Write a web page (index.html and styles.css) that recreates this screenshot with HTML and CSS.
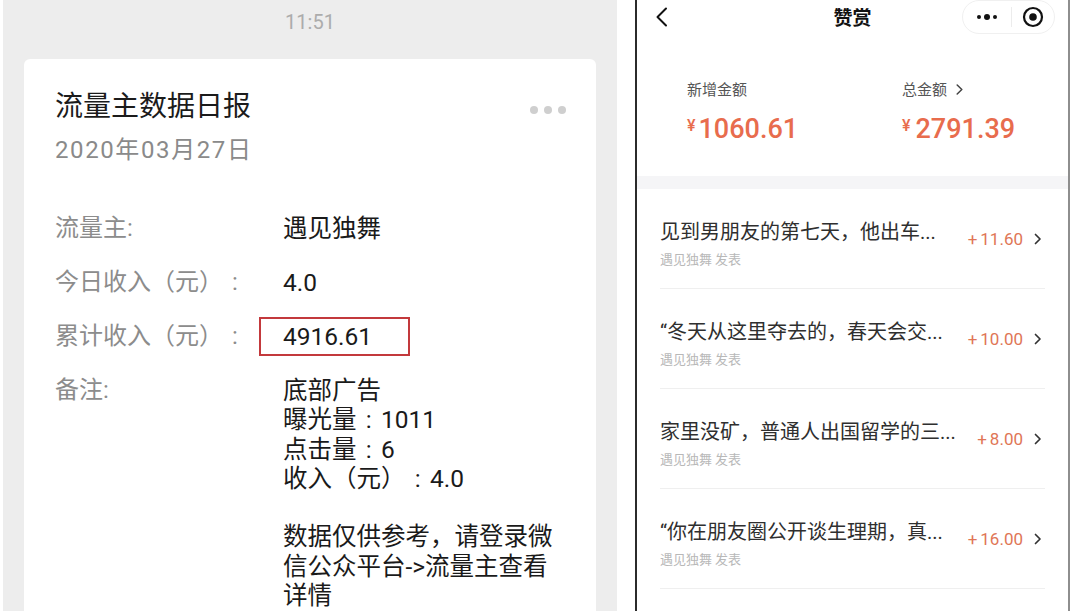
FILE: index.html
```html
<!DOCTYPE html>
<html lang="zh-CN">
<head>
<meta charset="utf-8">
<title>流量主数据日报 / 赞赏</title>
<link rel="stylesheet" href="styles.css">
</head>
<body>
<div class="page">
  <section class="chat">
    <div class="time">11:51</div>
    <article class="card">
      <header class="card-head">
        <div>
          <h1 class="card-title">流量主数据日报</h1>
          <div class="card-date">2020年03月27日</div>
        </div>
        <span class="more"><i></i><i></i><i></i></span>
      </header>
      <dl class="fields">
        <div class="field"><dt>流量主:</dt><dd>遇见独舞</dd></div>
        <div class="field"><dt>今日收入（元）<span class="colon">:</span></dt><dd>4.0</dd></div>
        <div class="field"><dt>累计收入（元）<span class="colon">:</span></dt><dd><span class="mark">4916.61</span></dd></div>
        <div class="field"><dt>备注:</dt>
          <dd>
            <span class="line">底部广告</span>
            <span class="line">曝光量<span class="colon">:</span>1011</span>
            <span class="line">点击量<span class="colon">:</span>6</span>
            <span class="line">收入（元）<span class="colon">:</span>4.0</span>
            <span class="line blank"></span>
            <span class="line">数据仅供参考，请登录微</span>
            <span class="line">信公众平台-&gt;流量主查看</span>
            <span class="line">详情</span>
          </dd>
        </div>
      </dl>
    </article>
  </section>

  <section class="phone">
    <header class="nav">
      <span class="back">
        <svg width="13" height="20" viewBox="0 0 13 20"><polyline points="11,1.5 2.5,10 11,18.5" fill="none" stroke="#111" stroke-width="2" stroke-linecap="round" stroke-linejoin="round"/></svg>
      </span>
      <span class="nav-title">赞赏</span>
      <div class="capsule">
        <span class="cap-more"><i></i><i class="big"></i><i></i></span>
        <span class="cap-sep"></span>
        <span class="cap-close">
          <svg width="22" height="22" viewBox="0 0 22 22"><circle cx="11" cy="11" r="9" fill="none" stroke="#111" stroke-width="2.2"/><circle cx="11" cy="11" r="3.8" fill="#111"/></svg>
        </span>
      </div>
    </header>

    <div class="summary">
      <div class="stat">
        <div class="stat-label">新增金额</div>
        <div class="stat-value"><span class="yen">¥</span>1060.61</div>
      </div>
      <div class="stat">
        <div class="stat-label">总金额
          <svg width="7" height="11" viewBox="0 0 7 11"><polyline points="1.2,1 5.8,5.5 1.2,10" fill="none" stroke="#444" stroke-width="1.5" stroke-linecap="round" stroke-linejoin="round"/></svg>
        </div>
        <div class="stat-value"><span class="yen wide">¥</span>2791.39</div>
      </div>
    </div>

    <div class="band"></div>

    <ul class="list">
      <li class="item">
        <div class="item-main">
          <div class="item-title">见到男朋友的第七天，他出车...</div>
          <div class="item-sub">遇见独舞 发表</div>
        </div>
        <span class="item-amount"><span class="plus">+</span>11.60</span>
        <svg class="chev" width="8" height="12" viewBox="0 0 8 12"><polyline points="1.5,1.5 6,6 1.5,10.5" fill="none" stroke="#333" stroke-width="1.7" stroke-linecap="round" stroke-linejoin="round"/></svg>
      </li>
      <li class="item">
        <div class="item-main">
          <div class="item-title">“冬天从这里夺去的，春天会交...</div>
          <div class="item-sub">遇见独舞 发表</div>
        </div>
        <span class="item-amount"><span class="plus">+</span>10.00</span>
        <svg class="chev" width="8" height="12" viewBox="0 0 8 12"><polyline points="1.5,1.5 6,6 1.5,10.5" fill="none" stroke="#333" stroke-width="1.7" stroke-linecap="round" stroke-linejoin="round"/></svg>
      </li>
      <li class="item">
        <div class="item-main">
          <div class="item-title">家里没矿，普通人出国留学的三...</div>
          <div class="item-sub">遇见独舞 发表</div>
        </div>
        <span class="item-amount"><span class="plus">+</span>8.00</span>
        <svg class="chev" width="8" height="12" viewBox="0 0 8 12"><polyline points="1.5,1.5 6,6 1.5,10.5" fill="none" stroke="#333" stroke-width="1.7" stroke-linecap="round" stroke-linejoin="round"/></svg>
      </li>
      <li class="item">
        <div class="item-main">
          <div class="item-title">“你在朋友圈公开谈生理期，真...</div>
          <div class="item-sub">遇见独舞 发表</div>
        </div>
        <span class="item-amount"><span class="plus">+</span>16.00</span>
        <svg class="chev" width="8" height="12" viewBox="0 0 8 12"><polyline points="1.5,1.5 6,6 1.5,10.5" fill="none" stroke="#333" stroke-width="1.7" stroke-linecap="round" stroke-linejoin="round"/></svg>
      </li>
    </ul>
  </section>
</div>
</body>
</html>
```

FILE: styles.css
```css
html, body {
  margin: 0;
  padding: 0;
  width: 1080px;
  height: 611px;
  overflow: hidden;
  background: #ffffff;
  font-family: "Roboto", "Noto Sans CJK SC", sans-serif;
  text-spacing-trim: space-all;
}

.page {
  display: flex;
  height: 611px;
}

/* ---------- left: chat card ---------- */
.chat {
  margin-left: 3px;
  width: 614px;
  height: 611px;
  background: #ededed;
  display: flex;
  flex-direction: column;
  overflow: hidden;
}

.time {
  padding-top: 10px;
  height: 24px;
  line-height: 24px;
  text-align: center;
  font-size: 20px;
  color: #acacac;
}

.card {
  margin: 25px 21px 0 21px;
  flex: 1;
  background: #ffffff;
  border-radius: 6px 6px 0 0;
  padding: 28px 30px 0 31px;
}

.card-head {
  display: flex;
  justify-content: space-between;
  align-items: flex-start;
}

.card-title {
  margin: 0;
  font-size: 28px;
  line-height: 34px;
  font-weight: 400;
  color: #1b1b1b;
  font-family: "Noto Sans CJK SC", sans-serif;
}

.card-date {
  margin-top: 14px;
  font-size: 24px;
  line-height: 30px;
  letter-spacing: 1.6px;
  color: #8a8a8a;
}

.more {
  display: flex;
  gap: 6px;
  margin-top: 19px;
}
.more i {
  display: block;
  width: 8px;
  height: 8px;
  border-radius: 50%;
  background: #cfcfcf;
}

.fields {
  margin: 49px 0 0 0;
}

.field {
  display: grid;
  grid-template-columns: 228px 1fr;
  margin-bottom: 24.7px;
}

.field dt {
  font-size: 24px;
  line-height: 29.3px;
  color: #8c8c8c;
}

.field dd {
  margin: 0;
  font-size: 24.5px;
  line-height: 29.3px;
  color: #1a1a1a;
}

.colon {
  display: inline-block;
  width: 1em;
  text-align: center;
}

.line {
  display: block;
  height: 29.3px;
}

.mark {
  position: relative;
  display: inline-block;
}
.mark::before {
  content: "";
  position: absolute;
  left: -24px;
  top: -5px;
  width: 151px;
  height: 39px;
  box-sizing: border-box;
  border: 2px solid #c3393c;
}

/* ---------- right: reward page ---------- */
.phone {
  margin-left: 18px;
  width: 431px;
  height: 611px;
  border-left: 2px solid #2b2b2b;
  border-right: 2px solid #8e8e8e;
  background: #ffffff;
  overflow: hidden;
}

.nav {
  display: grid;
  grid-template-columns: 1fr auto 1fr;
  align-items: center;
  height: 30px;
}

.back {
  padding-left: 18px;
  display: flex;
  align-items: center;
}

.nav-title {
  font-family: "Noto Sans CJK SC", sans-serif;
  font-size: 19px;
  font-weight: 600;
  color: #111;
  line-height: 24px;
}

.capsule {
  justify-self: end;
  margin-right: 13px;
  width: 93px;
  height: 34px;
  box-sizing: border-box;
  border: 1px solid #f0f0f0;
  border-radius: 17px;
  display: flex;
  align-items: center;
  background: #fff;
}

.cap-more {
  width: 48px;
  display: flex;
  justify-content: center;
  align-items: center;
  gap: 3px;
}
.cap-more i {
  display: block;
  width: 4px;
  height: 4px;
  border-radius: 50%;
  background: #111;
}
.cap-more i.big {
  width: 6px;
  height: 6px;
}

.cap-sep {
  width: 1px;
  height: 20px;
  background: #ececec;
}

.cap-close {
  flex: 1;
  display: flex;
  justify-content: center;
  align-items: center;
}

.summary {
  display: grid;
  grid-template-columns: 215px 1fr;
  padding: 49px 0 29px 50px;
}

.stat-label {
  display: flex;
  align-items: center;
  gap: 9px;
  font-size: 15px;
  line-height: 20px;
  color: #555;
  font-family: "Noto Sans CJK SC", sans-serif;
}

.stat-value {
  margin-top: 9px;
  font-size: 27px;
  line-height: 36px;
  font-weight: 500;
  color: #e86c4d;
}

.yen {
  font-size: 16px;
  vertical-align: 7px;
  margin-right: 3px;
}
.yen.wide {
  margin-right: 5px;
}

.band {
  height: 13px;
  background: #f5f5f7;
}

.list {
  margin: 0 23px;
  padding: 0;
  list-style: none;
}

.item {
  display: flex;
  align-items: center;
  height: 99px;
  border-bottom: 1px solid #efefef;
}

.item-main {
  flex: 1;
  padding-top: 9px;
}

.item-title {
  font-size: 20px;
  line-height: 26px;
  color: #2f2f2f;
}

.item-sub {
  margin-top: 5px;
  font-size: 13px;
  line-height: 18px;
  color: #b8b8b8;
  font-family: "Noto Sans CJK SC", sans-serif;
}

.item-amount {
  font-size: 17px;
  color: #e07656;
}
.plus {
  margin-right: 3px;
}

.chev {
  margin-left: 11px;
  margin-right: 3px;
}
```
